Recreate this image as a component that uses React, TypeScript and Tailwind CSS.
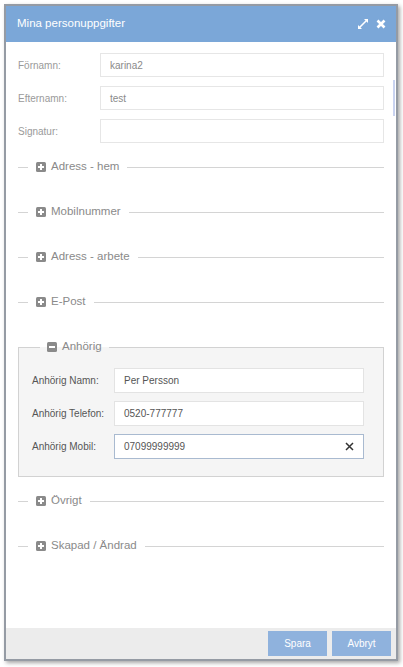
import React from "react";

const font = { fontFamily: '"Liberation Sans", Arial, sans-serif' };

function PlusBox({ minus = false }: { minus?: boolean }) {
  return (
    <svg width="10" height="10" viewBox="0 0 10 10" className="shrink-0">
      <rect x="0" y="0" width="10" height="10" rx="1.5" fill="#8a8a8a" />
      <rect x="2" y="4" width="6" height="2" fill="#fff" />
      {!minus && <rect x="4" y="2" width="2" height="6" fill="#fff" />}
    </svg>
  );
}

function Collapsed({ title, className = "" }: { title: string; className?: string }) {
  return (
    <div className={"flex items-center h-[16px] " + className}>
      <span className="w-[10px] h-px bg-[#d4d4d4]" />
      <span className="flex items-center gap-[5px] px-[8px] text-[11.5px] text-[#8a8a8a]">
        <PlusBox />
        {title}
      </span>
      <span className="flex-1 h-px bg-[#d4d4d4]" />
    </div>
  );
}

function Row({ label, value }: { label: string; value: string }) {
  return (
    <div className="flex items-center">
      <div className="w-[82px] text-[10px] text-[#9a9a9a]">{label}</div>
      <div className="flex-1 h-[24px] border border-[#e6e6e6] bg-white flex items-center px-[9px] text-[10px] text-[#8a8a8a]">
        {value}
      </div>
    </div>
  );
}

function InnerRow({ label, value, active = false }: { label: string; value: string; active?: boolean }) {
  return (
    <div className="flex items-center">
      <div className="w-[82px] text-[10px] text-[#555]">{label}</div>
      <div
        className={
          "flex-1 h-[25px] border bg-white flex items-center pl-[9px] pr-[9px] text-[10px] text-[#555] " +
          (active ? "border-[#a9bad0]" : "border-[#e3e3e3]")
        }
      >
        <span className="flex-1">{value}</span>
        {active && (
          <svg width="9" height="9" viewBox="0 0 9 9">
            <path d="M1 1 L8 8 M8 1 L1 8" stroke="#333" strokeWidth="1.5" />
          </svg>
        )}
      </div>
    </div>
  );
}

export default function App() {
  return (
    <div className="w-[403px] h-[667px] bg-white pt-[4px] pl-[4px]" style={font}>
      <div className="w-[394px] h-[657px] border-2 border-[#959ba4] shadow-[2px_2px_4px_rgba(0,0,0,0.35)] flex flex-col bg-white">
        <div className="h-[36px] bg-[#7ba7d8] flex items-center pl-[11px] pr-[10px] shrink-0">
          <span className="flex-1 text-white text-[11.5px]">Mina personuppgifter</span>
          <svg width="12" height="12" viewBox="0 0 12 12" className="mr-[7px]">
            <path d="M7 1 H11 V5 Z M1 7 V11 H5 Z" fill="#fff" />
            <path d="M10 2 L2 10" stroke="#fff" strokeWidth="1.6" />
          </svg>
          <svg width="10" height="10" viewBox="0 0 10 10">
            <path d="M1.5 1.5 L8.5 8.5 M8.5 1.5 L1.5 8.5" stroke="#fff" strokeWidth="2.6" />
          </svg>
        </div>
        <div className="flex-1 flex">
          <div className="flex-1 pl-[12px] pr-[8px] pt-[11px]">
            <div className="flex flex-col gap-[9px]">
              <Row label="Förnamn:" value="karina2" />
              <Row label="Efternamn:" value="test" />
              <Row label="Signatur:" value="" />
            </div>
            <Collapsed title="Adress - hem" className="mt-[16px]" />
            <Collapsed title="Mobilnummer" className="mt-[29px]" />
            <Collapsed title="Adress - arbete" className="mt-[29px]" />
            <Collapsed title="E-Post" className="mt-[29px]" />
            <fieldset className="mt-[29px] border border-[#d2d2d2] bg-[#f5f5f5] pl-[13px] pr-[19px] pb-[17px]">
              <legend className="ml-[8px] px-[7px] flex items-center gap-[5px] text-[11.5px] text-[#8a8a8a] h-[16px]">
                <PlusBox minus />
                Anhörig
              </legend>
              <div className="flex flex-col gap-[8px] pt-[13px]">
                <InnerRow label="Anhörig Namn:" value="Per Persson" />
                <InnerRow label="Anhörig Telefon:" value="0520-777777" />
                <InnerRow label="Anhörig Mobil:" value="07099999999" active />
              </div>
            </fieldset>
            <Collapsed title="Övrigt" className="mt-[16px]" />
            <Collapsed title="Skapad / Ändrad" className="mt-[29px]" />
          </div>
          <div className="w-[4px] flex flex-col pt-[38px]">
            <div className="h-[36px] w-[2px] ml-[1px] bg-[#c9d3f0]" />
          </div>
        </div>
        <div className="h-[31px] bg-[#ececec] shrink-0 flex items-center justify-end gap-[5px] pr-[5px]">
          <div className="w-[59px] h-[25px] bg-[#8fb2dd] text-white text-[10px] flex items-center justify-center">Spara</div>
          <div className="w-[59px] h-[25px] bg-[#8fb2dd] text-white text-[10px] flex items-center justify-center">Avbryt</div>
        </div>
      </div>
    </div>
  );
}
